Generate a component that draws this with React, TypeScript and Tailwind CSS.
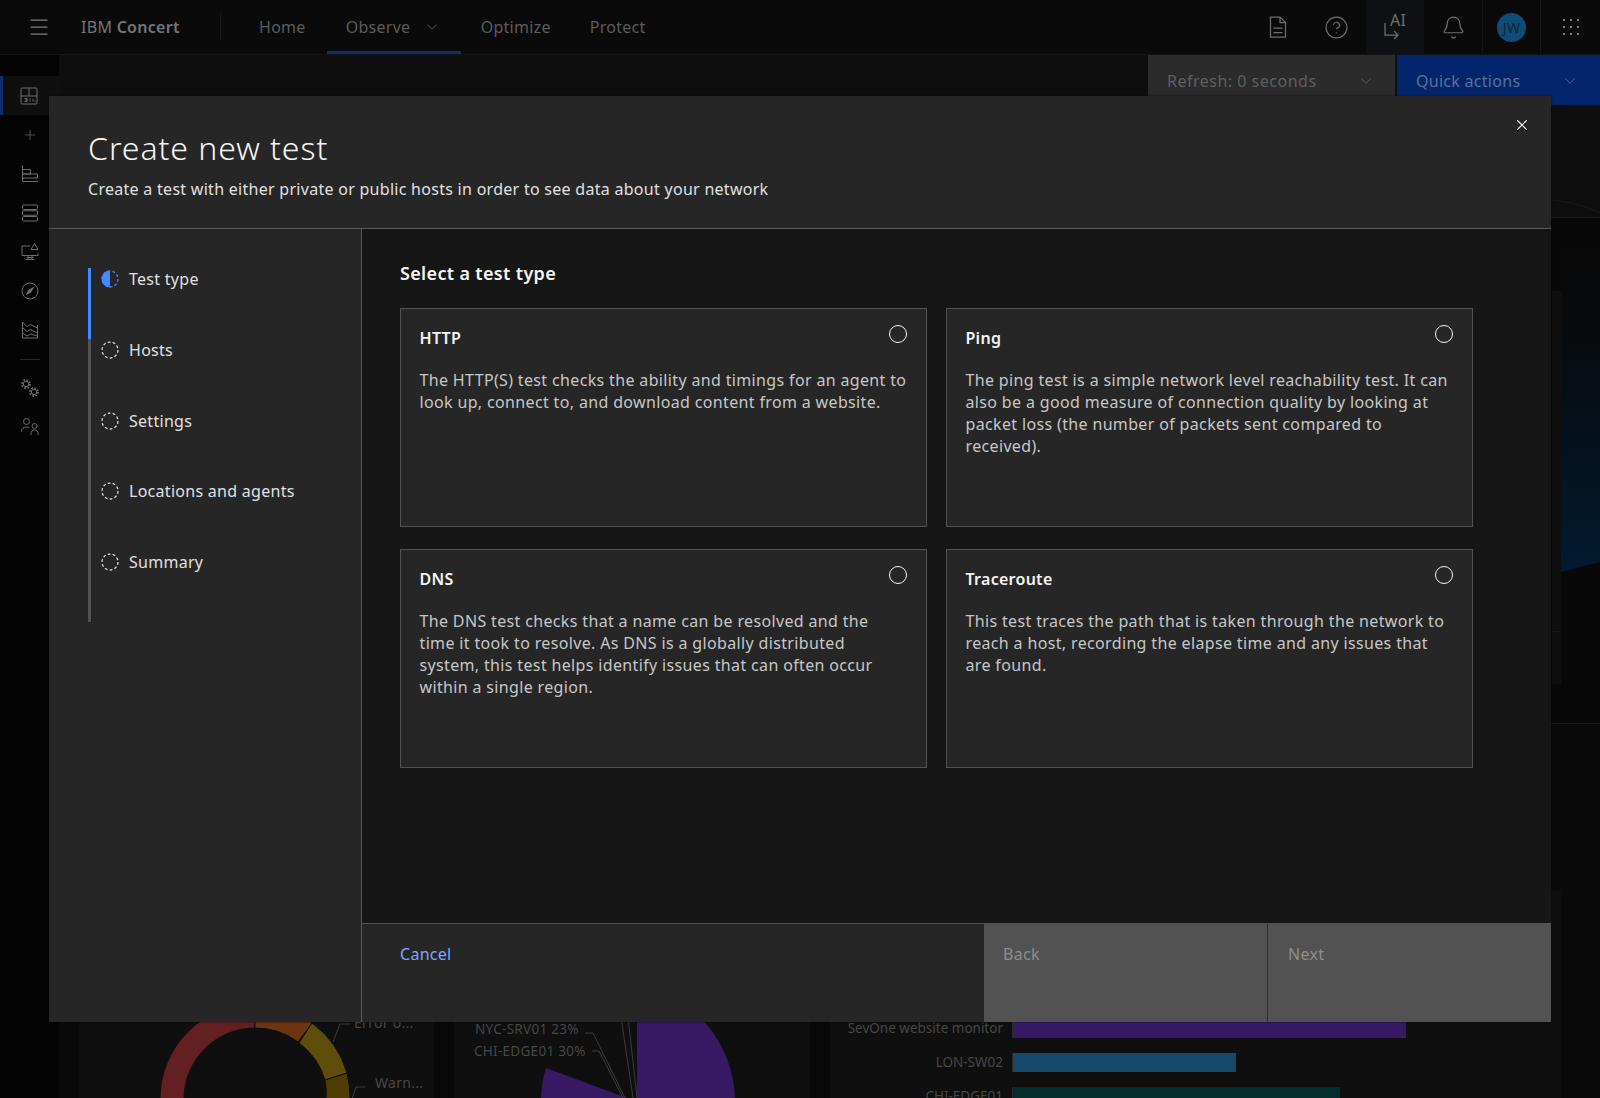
import { Bell, ChevronDown, CircleHelp, Menu, Plus, X } from "lucide-react";

const font = "font-['Noto_Sans',sans-serif]";

const RailIcon = ({ children }: { children: React.ReactNode }) => (
  <svg width="20" height="20" viewBox="0 0 20 20" fill="none" stroke="#6e6e6e" strokeWidth="1">
    {children}
  </svg>
);

const railIcons = [
  <RailIcon key="bars">
    <path d="M2.500 1.500v16h15.500M2.500 14h15v-4h-15M2.500 10h8V5.500h-8" />
  </RailIcon>,
  <RailIcon key="rows">
    <rect x="2.500" y="2" width="15" height="4.500" rx="1" />
    <rect x="2.500" y="7.750" width="15" height="4.500" rx="1" />
    <rect x="2.500" y="13.500" width="15" height="4.500" rx="1" />
  </RailIcon>,
  <RailIcon key="monitor">
    <path d="M10 4H2v9.500h16v-2M8 13.500v4M12 13.500v4M5.500 17.500h9M6.500 15.500h7M14.500 1.500l3.500 6h-7z" />
  </RailIcon>,
  <RailIcon key="compass">
    <circle cx="10" cy="10" r="8" />
    <path d="M13.500 6.500 11 11 9 9zM6.500 13.500 9 9l2 2z" fill="#6e6e6e" />
  </RailIcon>,
  <RailIcon key="area">
    <path d="M2.500 2v16h15V5M2.500 2l4.500 4.500 3.500-2 7 3.500M2.500 7.500l4.500 4 3.500-2 7 3.500M2.500 13l4.500 3 3.500-2 7 2" />
  </RailIcon>,
];

const Gear = ({ cx, cy }: { cx: number; cy: number }) => (
  <g>
    <circle cx={cx} cy={cy} r="2.700" />
    <circle cx={cx} cy={cy} r="4" strokeWidth="1.800" strokeDasharray="1.600 1.540" />
  </g>
);

const bottomRailIcons = [
  <RailIcon key="gears">
    <Gear cx={6} cy={6} />
    <Gear cx={14} cy={14} />
  </RailIcon>,
  <RailIcon key="users">
    <circle cx="6.500" cy="4.500" r="3" />
    <circle cx="14.500" cy="9" r="2.500" />
    <path d="M1.500 14.500c0-3 2-4.500 5-4.500 1.200 0 2 .3 2.800 .8M11 18v-1.500c0-2 1.500-3.500 3.500-3.500s3.500 1.500 3.500 3.500V18" />
  </RailIcon>,
];

const Sidebar = () => (
  <aside className="w-[59px] shrink-0 bg-[#040404] pt-[21px] flex flex-col items-center">
    <div className="h-[39px] w-full flex items-center justify-center bg-[#0f0f0f] border-l-[3px] border-[#0e2d6b] pr-[4px]">
      <RailIcon>
        <rect x="2" y="2" width="16" height="16" rx="1" />
        <path d="M2 10h16M10 2v8M5.500 12.500h2.500v1.500H6M8 14v1.500H5.500M11 12.500v3M14 13v2.500M16 14.500v1" />
      </RailIcon>
    </div>
    <div className="h-[39px] flex items-center">
      <Plus size={16} strokeWidth={1} color="#6e6e6e" />
    </div>
    {railIcons.map((icon, i) => (
      <div key={i} className="h-[39px] flex items-center">
        {icon}
      </div>
    ))}
    <div className="w-[20px] h-px bg-[#2a2a2a] mt-[10px] mb-[8px]" />
    {bottomRailIcons.map((icon, i) => (
      <div key={i} className="h-[39px] flex items-center">
        {icon}
      </div>
    ))}
  </aside>
);

const TopBar = () => (
  <header className="h-[55px] shrink-0 bg-[#0a0a0a] border-b border-[#141414] flex items-center text-[16px] text-[#5c5c5c]">
    <div className="w-[78px] pr-[1px] flex justify-center">
      <Menu size={24} strokeWidth={1.25} color="#7c7c7c" />
    </div>
    <div className="text-[#757575] w-[139px] pl-[3px]">
      IBM <span className="font-semibold">Concert</span>
    </div>
    <div className="w-px h-[28px] bg-[#191919] ml-[3px]" />
    <nav className="flex items-center ml-[19px] h-full">
      <span className="pl-[19px] pr-[21px]">Home</span>
      <div className="relative h-full flex items-center gap-[13px] px-[19px] w-[134px]">
        Observe
        <ChevronDown size={18} strokeWidth={1.25} />
        <div className="absolute left-0 right-0 bottom-0 h-[3px] bg-[#0f2e6b]" />
      </div>
      <span className="pl-[20px] pr-[19px]">Optimize</span>
      <span className="px-[20px]">Protect</span>
    </nav>
    <div className="ml-auto flex h-full">
      <div className="w-[58px] flex items-center justify-center">
        <svg width="18" height="22" viewBox="0 0 18 22" fill="none" stroke="#6e6e6e" strokeWidth="1.250">
          <path d="M1.500 1h9.500l5.500 5.500V21h-15zM11 1v5.500h5.500M4.500 12h9M4.500 16.500h9" />
        </svg>
      </div>
      <div className="w-[59px] flex items-center justify-center">
        <CircleHelp size={25} strokeWidth={1.1} color="#6e6e6e" />
      </div>
      <div className="w-[58px] flex items-center justify-center bg-[#0e1013]">
        <div className="relative w-[24px] h-[26px]">
          <svg width="24" height="26" viewBox="0 0 24 26" fill="none" stroke="#6e6e6e" strokeWidth="1.250">
            <path d="M2 9v12h13M11 17l4 4-4 4" />
          </svg>
          <span className="absolute left-[7px] top-[-4px] text-[16px] leading-[20px] text-[#6e6e6e]">AI</span>
        </div>
      </div>
      <div className="w-[59px] flex items-center justify-center border-r border-[#161616]">
        <Bell size={25} strokeWidth={1.1} color="#6e6e6e" />
      </div>
      <div className="w-[58px] flex items-center justify-center border-r border-[#161616]">
        <div className="w-[29px] h-[29px] rounded-full bg-[#0f4c78] flex items-center justify-center text-[14px] text-[#0a2438]">
          JW
        </div>
      </div>
      <div className="w-[59px] flex items-center justify-center">
        <svg width="16" height="18" viewBox="0 0 16 18" fill="#7a7a7a">
          {[1, 8, 15].map((x) =>
            [2, 9, 16].map((y) => <rect key={`${x}-${y}`} x={x - 1} y={y - 1} width="2" height="2" />)
          )}
        </svg>
      </div>
    </div>
  </header>
);

const DonutChart = () => (
  <svg width="355" height="110" viewBox="79 988 355 110" fill="none" className="block">
    <g stroke="#0f0f0f">
      <path d="M160 1099a95 95 0 0 1 95-95v24a71 71 0 0 0-71 71z" fill="#622023" />
      <path d="M255 1004a95 95 0 0 1 57 19l-14 19a71 71 0 0 0-43-14z" fill="#6b3510" />
      <path d="M312 1023a95 95 0 0 1 35 50l-22 7a71 71 0 0 0-26-37z" fill="#5f4e0b" />
      <path d="M347 1073a95 95 0 0 1 3 26h-24a71 71 0 0 0-1-19z" fill="#4f3c05" />
    </g>
    <path d="M333 1042l7-18h11M352 1099l4-12h9" stroke="#3c3c3c" />
    <text x="354" y="1028" fontSize="14" fill="#474747">Error o...</text>
    <text x="375" y="1088" fontSize="14" fill="#474747">Warn...</text>
  </svg>
);

const PieChart = () => (
  <svg width="356" height="110" viewBox="454 988 356 110" fill="none" className="block">
    <path d="M637 1104v-120a120 120 0 0 1 98 114z" fill="#371a63" />
    <path d="M546 1068 627 1098h-86a100 100 0 0 1 5-30z" fill="#371a63" />
    <path d="M585 1033h8l32 65M592 1051h7l24 47M617 990l16 108M625 990l12 108" stroke="#3c3c3c" />
    <text x="475" y="1034" fontSize="13.500" fill="#474747">NYC-SRV01 23%</text>
    <text x="474" y="1056" fontSize="13.500" fill="#474747">CHI-EDGE01 30%</text>
  </svg>
);

const bars = [
  { label: "SevOne website monitor", width: "w-[394px]", color: "bg-[#371a63]" },
  { label: "LON-SW02", width: "w-[224px]", color: "bg-[#15486a]" },
  { label: "CHI-EDGE01", width: "w-[328px]", color: "bg-[#022f2c]" },
];

const BarChart = () => (
  <div className="pt-[31px] flex flex-col gap-[15px]">
    {bars.map((b) => (
      <div key={b.label} className="flex items-center h-[19px] gap-[9px]">
        <span className="w-[173px] text-right text-[13.5px] leading-none text-[#474747] whitespace-nowrap tracking-normal">{b.label}</span>
        <div className={`h-[19px] ${b.width} ${b.color} border-l border-[#2a2a2a]`} />
      </div>
    ))}
  </div>
);

const Background = () => (
  <div className="flex-1 flex min-h-0">
    <Sidebar />
    <main className="flex-1 min-w-0 flex flex-col">
      <section className="h-[163px] shrink-0 bg-[#0e0e0e] border-b border-[#1c1c1c] relative">
        <div className="flex justify-end h-[50px]">
          <div className="w-[247px] h-full bg-[#2b2b2b] text-[#5f5f5f] text-[16px] tracking-[0.5px] flex items-center justify-between pl-[19px] pr-[20px] pt-[1px]">
            Refresh: 0 seconds
            <ChevronDown size={18} strokeWidth={1.25} />
          </div>
          <div className="w-[203px] ml-[2px] h-full bg-[#03256c] text-[#5a6f9a] text-[16px] flex items-center justify-between pl-[19px] pr-[21px] pt-[1px]">
            Quick actions
            <ChevronDown size={18} strokeWidth={1.25} />
          </div>
        </div>
        <svg width="60" height="20" viewBox="0 0 60 20" fill="none" className="absolute right-0 bottom-0">
          <path d="M0 2c25 1 45 7 60 14" stroke="#191919" />
        </svg>
      </section>
      <section className="h-[506px] shrink-0 bg-[#080808] border-b border-[#1c1c1c] relative overflow-hidden">
        <div className="absolute right-[39px] top-[73px] w-[9px] h-[393px] bg-[#0f0f0f]">
          <div className="mt-[340px] h-px bg-[#191919]" />
        </div>
        <svg width="39" height="360" viewBox="0 0 39 360" className="absolute right-0 top-0">
          <defs>
            <linearGradient id="heroFade" x1="0" y1="0" x2="0" y2="1">
              <stop offset="0" stopColor="#080808" />
              <stop offset="0.3" stopColor="#080a0c" />
              <stop offset="1" stopColor="#021a30" />
            </linearGradient>
          </defs>
          <path d="M0 0h39v344L0 354z" fill="url(#heroFade)" />
        </svg>
      </section>
      <section className="flex-1 bg-[#090909] pl-[20px] pr-[39px] pt-[166px] flex gap-[20px] min-h-0 overflow-hidden">
        <div className="w-[355px] h-[208px] bg-[#0f0f0f] flex flex-col justify-end">
          <DonutChart />
        </div>
        <div className="w-[356px] h-[208px] bg-[#0f0f0f] flex flex-col justify-end">
          <PieChart />
        </div>
        <div className="flex-1 h-[208px] bg-[#0f0f0f] flex flex-col justify-end">
          <div className="h-[110px]">
            <BarChart />
          </div>
        </div>
      </section>
    </main>
  </div>
);

const StepIcon = ({ active }: { active?: boolean }) =>
  active ? (
    <svg width="18" height="18" viewBox="0 0 18 18" fill="none">
      <path d="M9 .5a8.500 8.500 0 0 0 0 17z" fill="#4589ff" />
      <circle cx="9" cy="9" r="8" stroke="#4589ff" strokeWidth="1.250" strokeDasharray="2.800 2.200" />
    </svg>
  ) : (
    <svg width="18" height="18" viewBox="0 0 18 18" fill="none">
      <circle cx="9" cy="9" r="8" stroke="#e0e0e0" strokeWidth="1.250" strokeDasharray="2.800 2.220" />
    </svg>
  );

const steps = ["Test type", "Hosts", "Settings", "Locations and agents", "Summary"];

const StepRail = () => (
  <div className="w-[313px] shrink-0 bg-[#262626] border-r border-[#5a5a5a] pl-[39px] pt-[39px]">
    <div className="relative w-[250px] pl-[10px] border-l-[3px] border-[#525252] h-[354px]">
      <div className="absolute left-[-3px] top-0 w-[3px] h-[71px] bg-[#4589ff]" />
      {steps.map((step, i) => (
        <div key={step} className="h-[70.75px] flex items-start gap-[10px] text-[16px] leading-[22px] text-[#e0e0e0]">
          <span className="mt-[2px]">
            <StepIcon active={i === 0} />
          </span>
          <span>{step}</span>
        </div>
      ))}
    </div>
  </div>
);

const tests = [
  {
    title: "HTTP",
    body: "The HTTP(S) test checks the ability and timings for an agent to look up, connect to, and download content from a website.",
  },
  {
    title: "Ping",
    body: "The ping test is a simple network level reachability test. It can also be a good measure of connection quality by looking at packet loss (the number of packets sent compared to received).",
  },
  {
    title: "DNS",
    body: "The DNS test checks that a name can be resolved and the time it took to resolve. As DNS is a globally distributed system, this test helps identify issues that can often occur within a single region.",
  },
  {
    title: "Traceroute",
    body: "This test traces the path that is taken through the network to reach a host, recording the elapse time and any issues that are found.",
  },
];

const TestCard = ({ title, body }: { title: string; body: string }) => (
  <div className="relative h-[219px] bg-[#262626] border border-[#525252] pl-[18.5px] pr-[18px] pt-[18px]">
    <h3 className="text-[16px] leading-[22px] font-semibold text-[#f4f4f4]">{title}</h3>
    <p className="mt-[20px] text-[16px] leading-[22px] tracking-[0.35px] text-[#c6c6c6]">{body}</p>
    <div className="absolute top-[16px] right-[19px] w-[18px] h-[18px] rounded-full border border-[#f4f4f4]" />
  </div>
);

const Modal = () => (
  <div className="absolute left-[49px] top-[96px] w-[1502px] h-[926px] flex flex-col bg-[#262626] shadow-[0_0_2px_rgba(0,0,0,0.6)]">
    <div className="relative h-[133px] shrink-0 border-b border-[#5a5a5a] pl-[39px] pt-[32px]">
      <h1 className="text-[32px] leading-[40px] font-light tracking-[0.95px] text-[#f4f4f4]">Create new test</h1>
      <p className="mt-[10px] text-[16px] leading-[22px] text-[#e0e0e0]">
        Create a test with either private or public hosts in order to see data about your network
      </p>
      <X size={18} strokeWidth={1.5} color="#f4f4f4" className="absolute right-[20px] top-[20px]" />
    </div>
    <div className="flex-1 flex min-h-0">
      <StepRail />
      <div className="flex-1 min-w-0 flex flex-col bg-[#161616]">
        <div className="flex-1 pl-[38px] pr-[78px] pt-[31px]">
          <h2 className="text-[18px] leading-[26px] font-semibold tracking-[0.34px] text-[#f4f4f4]">Select a test type</h2>
          <div className="mt-[22px] grid grid-cols-2 gap-x-[19px] gap-y-[22px]">
            {tests.map((t) => (
              <TestCard key={t.title} title={t.title} body={t.body} />
            ))}
          </div>
        </div>
        <div className="h-[99px] shrink-0 flex bg-[#262626] border-t border-[#525252] text-[16px] leading-[22px]">
          <div className="flex-1 pl-[38px] pt-[19px] text-[#78a9ff]">Cancel</div>
          <div className="w-[283px] bg-[#525252] pl-[19px] pt-[19px] text-[#8d8d8d]">Back</div>
          <div className="w-[284px] bg-[#525252] border-l border-[#2e2e2e] pl-[20px] pt-[19px] text-[#8d8d8d]">Next</div>
        </div>
      </div>
    </div>
  </div>
);

export default function App() {
  return (
    <div className={`relative w-[1600px] h-[1098px] overflow-hidden bg-[#090909] flex flex-col tracking-[0.28px] ${font}`}>
      <TopBar />
      <Background />
      <Modal />
    </div>
  );
}
